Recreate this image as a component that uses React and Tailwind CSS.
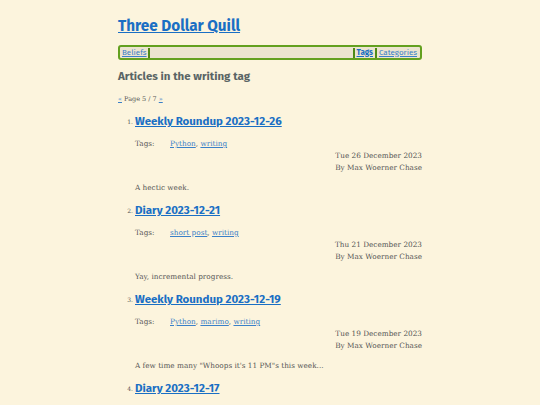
const ARTICLES = [
  {
    n: 1,
    title: 'Weekly Roundup 2023-12-26',
    tags: ['Python', 'writing'],
    date: 'Tue 26 December 2023',
    summary: 'A hectic week.',
  },
  {
    n: 2,
    title: 'Diary 2023-12-21',
    tags: ['short post', 'writing'],
    date: 'Thu 21 December 2023',
    summary: 'Yay, incremental progress.',
  },
  {
    n: 3,
    title: 'Weekly Roundup 2023-12-19',
    tags: ['Python', 'marimo', 'writing'],
    date: 'Tue 19 December 2023',
    summary: 'A few time many "Whoops it\'s 11 PM"s this week...',
  },
  {
    n: 4,
    title: 'Diary 2023-12-17',
    tags: ['short post', 'writing'],
    date: 'Sun 17 December 2023',
    summary: '',
  },
];

const sans = "font-['Fira_Sans','Open_Sans','Noto_Sans',sans-serif]";
const serif = "font-['Roboto_Slab','DejaVu_Serif',serif]";

function Article({ a }) {
  return (
    <li className="flex">
      <span className={`${serif} w-[17px] shrink-0 pr-[2px] text-right text-[6px] leading-[17px] text-[#555]`}>{a.n}.</span>
      <div className="flex-1">
        <a href="#" className={`${sans} block text-[11.5px] font-bold leading-[16px] text-[#1a6fc4] underline`}>
          <span>{a.title}</span>
        </a>
        <div className={`${serif} mt-[9px] flex text-[7.3px] leading-[12px] text-[#555]`}>
          <span className="w-[35px]">Tags:</span>
          <span>
            {a.tags.map((t, i) => (
              <span key={t}>
                <a href="#" className="text-[#3a80c8] underline">{t}</a>
                {i < a.tags.length - 1 ? ', ' : ''}
              </span>
            ))}
          </span>
        </div>
        <div className={`${serif} text-right text-[7.3px] leading-[12px] text-[#555]`}>
          <div>{a.date}</div>
          <div>By Max Woerner Chase</div>
        </div>
        <p className={`${serif} mt-[8px] mb-[8px] text-[7.3px] leading-[12px] text-[#555]`}>{a.summary}</p>
      </div>
    </li>
  );
}

export default function App() {
  return (
    <div className="min-h-[405px] bg-[#fcf4dd]">
      <div className="mx-auto w-[304px] pt-[16px]">
        <a href="#" className={`${sans} block w-fit text-[15.3px] font-bold leading-[20px] text-[#1a6fc4] underline`}>
          Three Dollar Quill
        </a>
        <nav className={`${sans} mt-[9px] flex h-[15px] items-center rounded-[3px] border-2 border-[#63a01f] bg-[#ece4cf] px-[1px] text-[8px]`}>
          <a href="#" className="px-[1px] text-[#3a80c8] underline">Beliefs</a>
          <span className="h-[10px] w-[2px] bg-[#4f8a16]" />
          <span className="flex-1" />
          <span className="h-[10px] w-[2px] bg-[#4f8a16]" />
          <a href="#" className="px-[2px] font-bold text-[#1a6fc4] underline">Tags</a>
          <span className="h-[10px] w-[2px] bg-[#4f8a16]" />
          <a href="#" className="px-[2px] text-[#3a80c8] underline">Categories</a>
        </nav>
        <h1 className={`${sans} mt-[8px] text-[11.5px] font-bold leading-[16px] text-[#5a6565]`}>
          Articles in the writing tag
        </h1>
        <p className={`${serif} mt-[10px] text-[6.5px] leading-[10px] text-[#555]`}>
          <a href="#" className="text-[#3a80c8] underline">«</a> Page 5 / 7{' '}
          <a href="#" className="text-[#3a80c8] underline">»</a>
        </p>
        <ol className="mt-[9px]">
          {ARTICLES.map((a) => (
            <Article key={a.n} a={a} />
          ))}
        </ol>
      </div>
    </div>
  );
}
